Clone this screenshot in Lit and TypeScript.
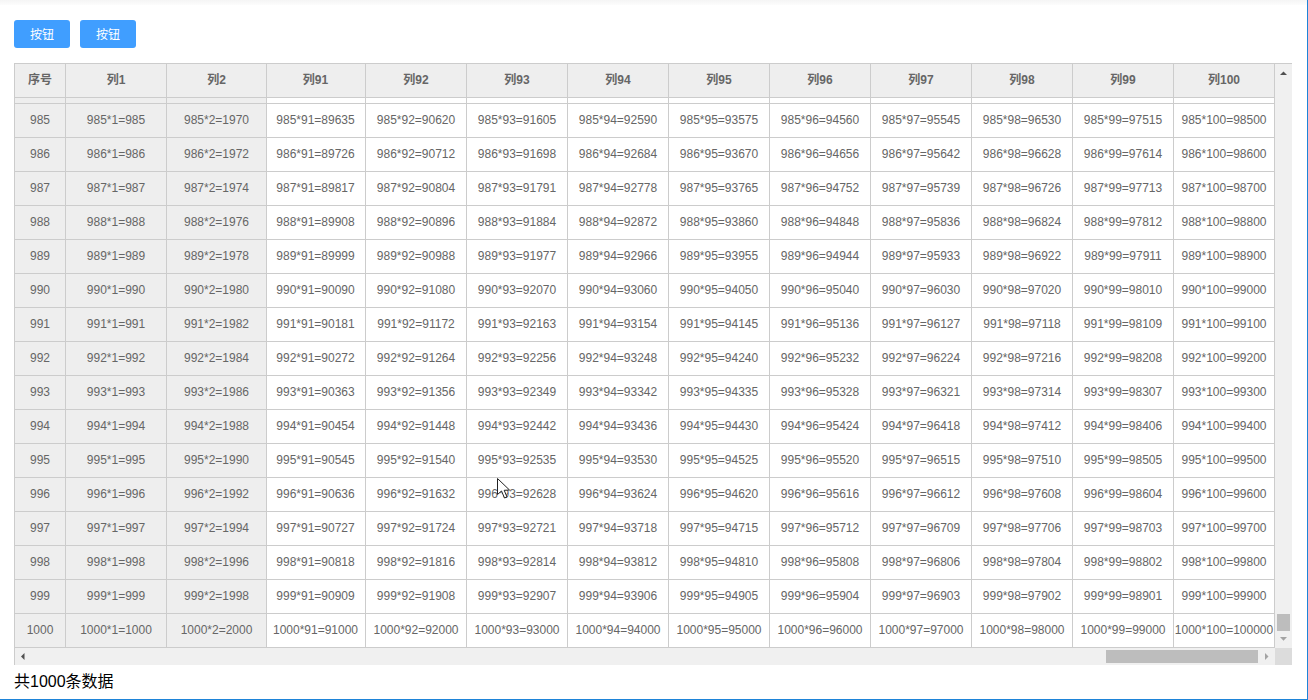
import { LitElement, html, css } from "lit";
import { customElement } from "lit/decorators.js";

const COLS = [
  { label: "序号", w: 51 },
  { label: "列1", n: 1, w: 101 },
  { label: "列2", n: 2, w: 100 },
  ...[91, 92, 93, 94, 95, 96, 97, 98, 99, 100].map((n, i) => ({
    label: `列${n}`,
    n,
    w: i === 0 ? 99 : 101,
  })),
] as { label: string; n?: number; w: number }[];

const ROWS = Array.from({ length: 16 }, (_, i) => 985 + i);
const TEMPLATE = COLS.map((c) => `${c.w}px`).join(" ");

@customElement("app-root")
export class AppRoot extends LitElement {
  static styles = css`
    :host {
      display: block;
      box-sizing: border-box;
      width: 1308px;
      height: 700px;
      position: relative;
      overflow: hidden;
      background: #fff;
      border-right: 1px solid #1e84d8;
      border-bottom: 1px solid #1e84d8;
      font-family: "Liberation Sans", "Noto Sans CJK SC", sans-serif;
      color: #666;
      font-size: 12px;
    }
    .topbar {
      height: 5px;
      background: linear-gradient(#f5f5f5, #fcfcfc);
    }
    .toolbar {
      display: flex;
      gap: 10px;
      padding: 15px 0 15px 14px;
    }
    .btn {
      box-sizing: border-box;
      width: 56px;
      height: 28px;
      padding-bottom: 2px;
      display: flex;
      align-items: center;
      justify-content: center;
      background: #409eff;
      color: #fff;
      border-radius: 3px;
      font-size: 12px;
    }
    .grid-wrap {
      display: grid;
      grid-template-columns: 1261px 17px;
      grid-template-rows: 585px 17px;
      margin-left: 14px;
      width: 1278px;
    }
    .table {
      border-left: 1px solid #ccc;
      border-top: 1px solid #ccc;
    }
    .row {
      display: grid;
      grid-template-columns: var(--cols);
      height: 34px;
    }
    .stub {
      height: 6px;
    }
    .cell {
      box-sizing: border-box;
      display: flex;
      align-items: center;
      justify-content: center;
      padding-bottom: 2px;
      border-right: 1px solid #ccc;
      border-bottom: 1px solid #ccc;
      white-space: nowrap;
      overflow: hidden;
    }
    .stub .cell {
      padding-bottom: 0;
    }
    .narrow {
      padding-right: 1px;
    }
    .fixed,
    .head .cell {
      background: #eee;
    }
    .head .cell {
      font-weight: 700;
      padding-bottom: 4px;
    }
    .vbar {
      background: #f0f0f0;
      border-top: 1px solid #ccc;
      display: flex;
      flex-direction: column;
      align-items: center;
      box-sizing: border-box;
    }
    .spacer {
      flex: 1;
    }
    .vthumb {
      width: 13px;
      height: 17px;
      background: #bdbdbd;
    }
    .arrow-v {
      height: 17px;
      display: flex;
      align-items: center;
      justify-content: center;
    }
    .hbar {
      background: #f0f0f0;
      border-left: 1px solid #ccc;
      display: flex;
      align-items: center;
      box-sizing: border-box;
    }
    .hthumb {
      width: 152px;
      height: 13px;
      background: #bdbdbd;
    }
    .arrow-h {
      width: 17px;
      height: 17px;
      display: flex;
      align-items: center;
      justify-content: center;
      flex: none;
    }
    .corner {
      background: #dcdcdc;
    }
    .total {
      padding: 7px 0 0 14px;
      font-size: 16px;
      line-height: 20px;
      color: #000;
    }
    .cursor {
      position: absolute;
      left: 497px;
      top: 478px;
      width: 15px;
      height: 22px;
    }
    svg {
      display: block;
    }
  `;

  private cell(col: { n?: number }, idx: number, row: number) {
    const text = idx === 0 ? `${row}` : `${row}*${col.n}=${row * col.n!}`;
    return html`<div class="cell ${idx < 3 ? "fixed" : ""} ${idx === 3 ? "narrow" : ""}">${text}</div>`;
  }

  private tri(points: string, fill: string) {
    return html`<svg width="9" height="9" viewBox="0 0 9 9"><polygon points=${points} fill=${fill}></polygon></svg>`;
  }

  render() {
    return html`
      <div class="topbar"></div>
      <div class="toolbar">
        <div class="btn">按钮</div>
        <div class="btn">按钮</div>
      </div>
      <div class="grid-wrap" style="--cols:${TEMPLATE}">
        <div class="table">
          <div class="row head">
            ${COLS.map((c, i) => html`<div class="cell ${i === 3 ? "narrow" : ""}">${c.label}</div>`)}
          </div>
          <div class="row stub">
            ${COLS.map((_, i) => html`<div class="cell ${i < 3 ? "fixed" : ""}"></div>`)}
          </div>
          ${ROWS.map(
            (r) => html`<div class="row">${COLS.map((c, i) => this.cell(c, i, r))}</div>`
          )}
        </div>
        <div class="vbar">
          <div class="arrow-v">${this.tri("1,7 8,7 4.5,3.5", "#505050")}</div>
          <div class="spacer"></div>
          <div class="vthumb"></div>
          <div class="arrow-v">${this.tri("1,2 8,2 4.5,5.7", "#a3a3a3")}</div>
        </div>
        <div class="hbar">
          <div class="arrow-h">${this.tri("5.5,1 5.5,8 2,4.5", "#505050")}</div>
          <div class="spacer"></div>
          <div class="hthumb"></div>
          <div class="arrow-h">${this.tri("3,1 3,8 6.5,4.5", "#a3a3a3")}</div>
        </div>
        <div class="corner"></div>
      </div>
      <div class="total">共1000条数据</div>
      <svg class="cursor" viewBox="0 0 15 22">
        <path d="M0.5 0.5 L0.5 16.5 L4.5 13 L7.5 20 L10 19 L7.2 12.3 L12.5 12 Z" fill="#fff" stroke="#222" stroke-width="1"></path>
      </svg>
    `;
  }
}
